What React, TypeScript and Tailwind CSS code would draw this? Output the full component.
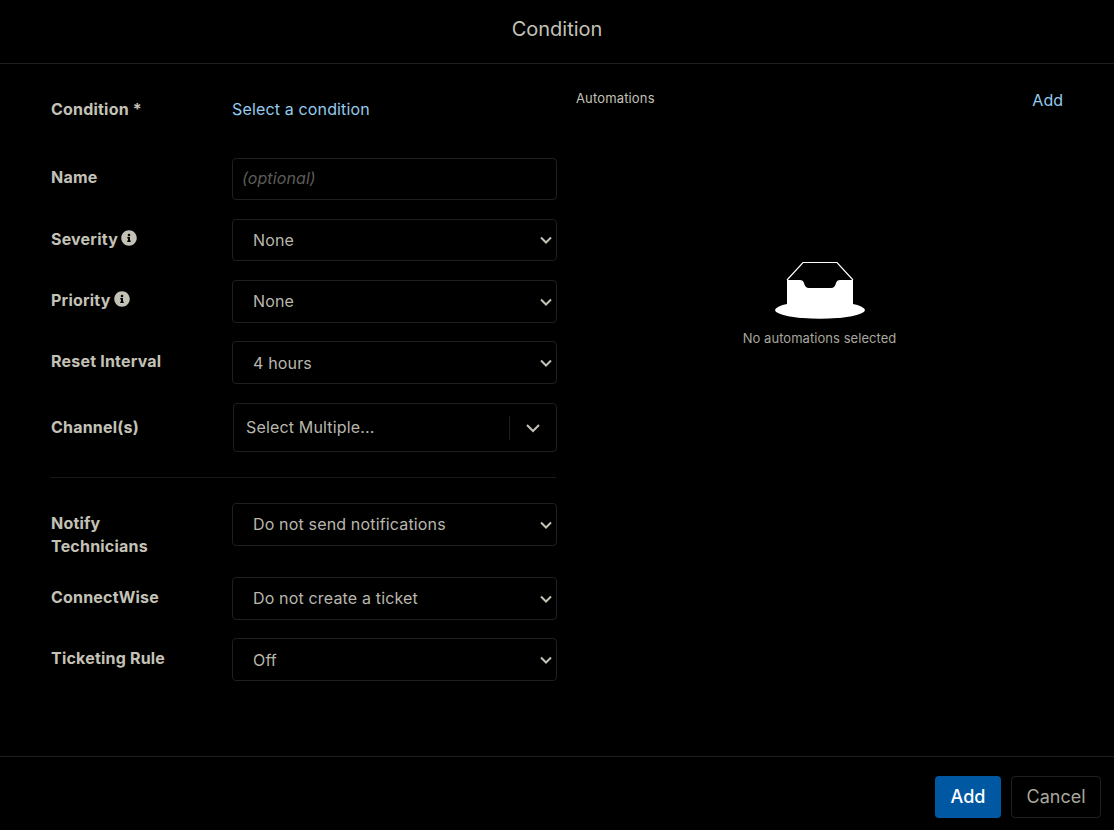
import { FaInfoCircle } from 'react-icons/fa';

const labelClass = 'w-[181px] shrink-0 text-[16px] leading-[23px] font-bold tracking-[0.2px] text-[#c4c2b7]';

function SelectRow({ label, value, info, className = '', height = 'h-[43px]' }: { label: string; value: string; info?: boolean; className?: string; height?: string }) {
    return (
        <div className={`flex items-start ${className}`}>
            <div className={`${labelClass} pt-[9px] flex items-center gap-[3px]`}>
                <span className="max-w-[125px]">{label}</span>
                {info && <FaInfoCircle className="w-4 h-4 -mt-[3px] text-[#c4c2b7]" />}
            </div>
            <div className="relative w-[325px]">
                <select
                    defaultValue={value}
                    className={`w-full ${height} appearance-none pl-[20px] pr-6 rounded border border-[#1f1f1f] bg-black text-[16px] tracking-[0.16px] text-[#b9b7ad] outline-none`}
                >
                    <option>{value}</option>
                </select>
                {/* chevron sits over the select */}
                <svg className="absolute right-[5px] top-1/2 -translate-y-1/2 pointer-events-none" width="12" height="8" viewBox="0 0 12 8" fill="none">
                    <path d="M1 1.5 L6 6.5 L11 1.5" stroke="#c4c2b7" strokeWidth="2" />
                </svg>
            </div>
        </div>
    );
}

function EmptyTray() {
    return (
        <svg width="90" height="59" viewBox="0 0 90 59" fill="none">
            <ellipse cx="45" cy="50" rx="45" ry="8.7" fill="#fff" />
            <path d="M12 20 L28 2.5 H62 L78 20" stroke="#fff" strokeWidth="1.2" />
            <path
                d="M12 20 H25 Q28 20 29 23 Q30 28 34 28 H56 Q60 28 61 23 Q62 20 65 20 H78 V47 Q78 50 75 50 H15 Q12 50 12 47 Z"
                fill="#fff"
            />
        </svg>
    );
}

export default function App() {
    return (
        <div className="w-[1114px] h-[830px] bg-black flex flex-col font-['Inter',sans-serif] overflow-hidden">
            {/* Header */}
            <div className="h-[64px] shrink-0 border-b border-[#1f1f1f] flex justify-center pt-[16px]">
                <h1 className="text-[20px] leading-[26px] text-[#c4c2b7]">Condition</h1>
            </div>

            {/* Body */}
            <div className="flex-1 flex pl-[51px] gap-[19px]">
                <div className="w-[506px] shrink-0 pt-[33.5px] flex flex-col">
                    <div className="flex items-start mb-[37.5px]">
                        <div className={labelClass}>Condition *</div>
                        <a className="text-[16px] leading-[23px] tracking-[0.15px] text-[#96cbee]">Select a condition</a>
                    </div>

                    <div className="flex items-start mb-[19px]">
                        <div className={`${labelClass} pt-2`}>Name</div>
                        <input
                            placeholder="(optional)"
                            className="w-[325px] h-[42px] px-[9px] pb-[2px] rounded border border-[#1f1f1f] bg-black text-[16px] tracking-[0.1px] placeholder:italic placeholder:text-[#5c5c58] outline-none"
                        />
                    </div>

                    <SelectRow label="Severity" value="None" info height="h-[42px]" className="mb-[19px]" />
                    <SelectRow label="Priority" value="None" info height="h-[43px] pb-[2px]" className="mb-[18px]" />
                    <SelectRow label="Reset Interval" value="4 hours" className="mb-[19px]" />

                    <div className="flex items-start">
                        <div className={`${labelClass} pt-[13px]`}>Channel(s)</div>
                        <div className="w-[324px] ml-px h-[49px] rounded border border-[#1f1f1f] flex items-center">
                            <span className="flex-1 pl-3 pb-[2px] text-[16px] tracking-[0.16px] text-[#b9b7ad]">Select Multiple...</span>
                            <div className="w-px h-6 bg-[#1f1f1f]" />
                            <svg className="mx-[15px]" width="16" height="16" viewBox="0 0 16 16" fill="none">
                                <path d="M2 5 L8 11 L14 5" stroke="#c4c2b7" strokeWidth="2" />
                            </svg>
                        </div>
                    </div>

                    <div className="h-px w-[505px] bg-[#1a1a1a] mt-[25px] mb-[25px]" />

                    <SelectRow label="Notify Technicians" value="Do not send notifications" height="h-[43px] pb-[2px]" className="mb-[19px]" />
                    <SelectRow label="ConnectWise" value="Do not create a ticket" height="h-[43px] pb-[2px]" className="mb-[18px]" />
                    <SelectRow label="Ticketing Rule" value="Off" />
                </div>

                <div className="w-[487px] pt-[24px] flex flex-col">
                    <div className="flex items-start justify-between">
                        <span className="text-[13px] leading-[20px] tracking-[0.15px] text-[#c4c2b7]">Automations</span>
                        <a className="text-[16px] leading-[24px] text-[#96cbee]">Add</a>
                    </div>
                    <div className="mt-[148px] flex flex-col items-center">
                        <EmptyTray />
                        <p className="mt-[9px] text-[13px] leading-[20px] tracking-[0.05px] text-[#a8a69d]">No automations selected</p>
                    </div>
                </div>
            </div>

            {/* Footer */}
            <div className="h-[74px] shrink-0 border-t border-[#1f1f1f] flex items-start justify-end gap-[10px] pt-[19px] pr-[13px]">
                <button className="w-[66px] h-[42px] pb-0.5 rounded bg-[#0058a3] text-[18px] font-medium text-white">Add</button>
                <button className="w-[90px] h-[42px] pb-0.5 rounded border border-[#1f1f1f] text-[18px] text-[#a8a69d]">Cancel</button>
            </div>
        </div>
    );
}
